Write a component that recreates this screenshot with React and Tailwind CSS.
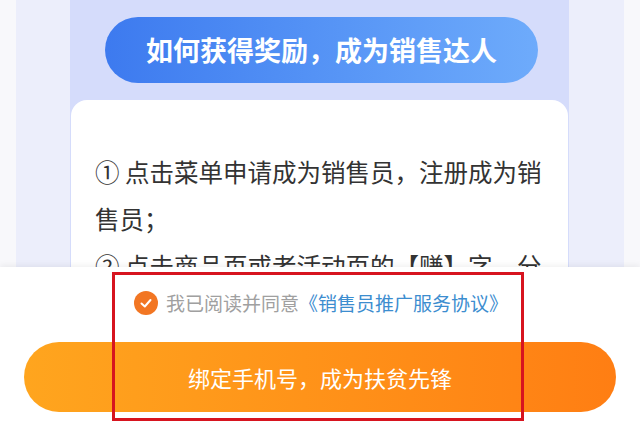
import React from "react";

export default function App() {
  const font = { fontFamily: '"Noto Sans CJK SC", "Noto Sans", sans-serif' };
  return (
    <div className="w-[640px] h-[434px] flex flex-col overflow-hidden bg-white relative" style={font}>
      {/* top content */}
      <div className="h-[267px] shrink-0 overflow-hidden bg-[#f8f8fb] px-[16px]">
        <div className="h-full bg-[#eceefb] pl-[54px] pr-[55px]">
          <div className="h-full bg-[#d5dcfb] flex flex-col">
            <div className="pt-[17px] flex justify-center pl-[4px]">
              <div className="w-[433px] h-[66px] rounded-full bg-gradient-to-r from-[#3d7aef] to-[#6eabfb] flex items-center justify-center">
                <span className="text-white text-[27px] font-bold">如何获得奖励，成为销售达人</span>
              </div>
            </div>
            <div className="mt-[17px] mx-[1px] flex-1 bg-white rounded-t-[16px] pl-[24px] pr-[18px] pt-[48px]">
              <p className="text-[24.5px] leading-[47px] text-[#333333]">
                ① 点击菜单申请成为销售员，注册成为销售员；
              </p>
              <p className="text-[24.5px] leading-[47px] text-[#333333]">
                ② 点击商品页或者活动页的【赚】字，分享
              </p>
            </div>
          </div>
        </div>
      </div>

      {/* bottom bar */}
      <div className="flex-1 bg-white shadow-[0_-2px_6px_rgba(0,0,0,0.06)] flex flex-col">
        <div className="h-[72px] flex items-center justify-center pl-[2px]">
          <div className="w-[24px] h-[24px] rounded-full bg-[#f27623] flex items-center justify-center mr-[8px]">
            <svg width="14" height="14" viewBox="0 0 14 14" fill="none">
              <polyline points="2.5,7.5 5.8,10.5 11.5,4" stroke="white" strokeWidth="2" strokeLinecap="round" strokeLinejoin="round" />
            </svg>
          </div>
          <span className="text-[19px] text-[#a0a0a0] leading-[24px]">我已阅读并同意</span>
          <span className="text-[19px] text-[#3c8dcf] leading-[24px]">《销售员推广服务协议》</span>
        </div>
        <div className="mt-[3px] mx-[24px] h-[70px] rounded-full bg-gradient-to-r from-[#ffa51e] to-[#ff7e13] flex items-center justify-center">
          <span className="text-white text-[22px] leading-none">绑定手机号，成为扶贫先锋</span>
        </div>
      </div>

      {/* red annotation box */}
      <div className="absolute left-[112px] top-[272px] w-[412px] h-[149px] border-[3px] border-[#d7141f] pointer-events-none" />
    </div>
  );
}
